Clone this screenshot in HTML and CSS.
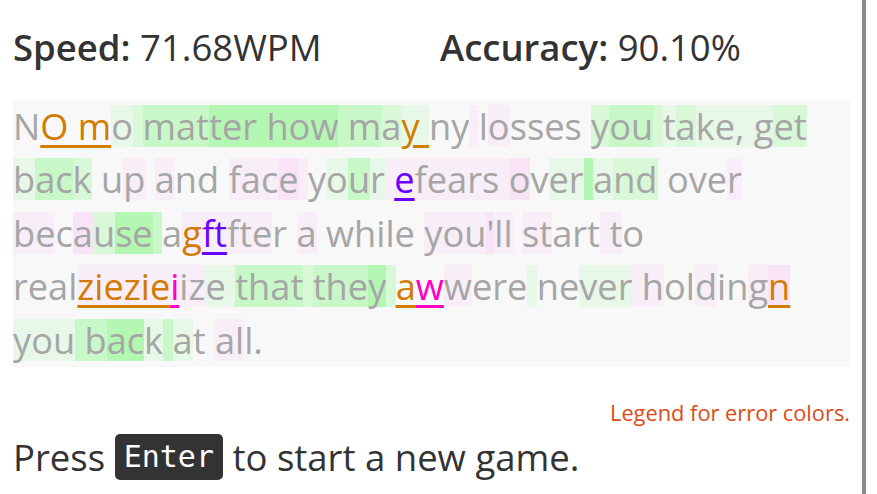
FILE: index.html
```html
<!DOCTYPE html>
<html>
<head>
<meta charset="utf-8">
<link rel="stylesheet" href="styles.css">
</head>
<body>
<div class="page">
  <div class="stats">
    <div class="stat stat-speed"><b>Speed:</b> 71.68WPM</div>
    <div class="stat"><b>Accuracy:</b> 90.10%</div>
  </div>
  <div class="textbox">
    <div class="line">N<span class="err-o">O m</span><span class="g1">o</span><span class="g2"> </span><span class="g3">mat</span><span class="g4">ter how</span><span class="g3"> m</span><span class="g2">a</span><span class="err-o g1">y </span>ny<span class="p1"> </span>l<span class="p1">o</span>sses <span class="g2">y</span><span class="g3">ou</span><span class="g2"> </span><span class="g1">t</span><span class="g2">a</span><span class="g1">ke, g</span><span class="g2">et</span></div>
    <div class="line"><span class="g1">b</span><span class="g3">ac</span><span class="g2">k</span> u<span class="p1">p</span> <span class="p1">a</span>nd <span class="p1">fac</span><span class="p2">e</span><span class="p1"> </span>y<span class="g1">o</span><span class="g3">u</span><span class="g1">r</span><span class="p1"> </span><span class="err-u p1">e</span><span class="p1">fears </span><span class="p2">o</span>v<span class="g1">er</span><span class="g4"> </span><span class="g1">a</span><span class="g2">nd</span> ove<span class="p1">r</span></div>
    <div class="line"><span class="p1">be</span>c<span class="p2">a</span><span class="g2">u</span><span class="g4">se</span><span class="g3"> </span>a<span class="err-o p1">g</span><span class="err-u p1">ft</span><span class="p1">fte</span>r <span class="p1">a</span> while <span class="p1">you</span><span class="p2">'</span><span class="p1">ll</span> <span class="p1">st</span>art<span class="p1"> t</span>o</div>
    <div class="line">real<span class="err-o p1">ziezie</span><span class="err-m p1">i</span><span class="p1">iz</span><span class="g1">e </span><span class="g3">that</span><span class="g2"> </span><span class="g3">the</span><span class="g4">y</span><span class="g2"> </span><span class="err-o">a</span><span class="err-m">w</span><span class="p1">w</span>ere<span class="g1"> </span>ne<span class="g1">ver</span><span class="p1"> h</span>ol<span class="p1">d</span>in<span class="p1">g</span><span class="err-o p2">n</span></div>
    <div class="line"><span class="g1">you</span><span class="g3"> b</span><span class="g4">ac</span><span class="g1">k</span><span class="g3"> </span><span class="g1">a</span>t <span class="p1">al</span>l.</div>
  </div>
  <div class="legend">Legend for error colors.</div>
  <div class="prompt">Press <kbd class="key">Enter</kbd> to start a new game.</div>
</div>
</body>
</html>
```

FILE: styles.css
```css
html, body {
  margin: 0;
  padding: 0;
  background: #ffffff;
}
.page {
  box-sizing: border-box;
  width: 866px;
  min-height: 494px;
  padding: 0 16px 0 13px;
  border-right: 4px solid #8c8c8c;
  font-family: "Open Sans", "Noto Sans", sans-serif;
  color: #333333;
}
.stats {
  display: flex;
  box-sizing: border-box;
  height: 100px;
  padding-top: 22px;
  font-size: 36.5px;
  line-height: 50px;
}
.stat b {
  font-weight: 600;
}
.stat-speed {
  width: 427px;
}
.textbox {
  background: #f8f8f8;
  width: 837px;
  font-size: 36.2px;
  line-height: 53.4px;
  color: #a6a6a6;
  white-space: nowrap;
}
.line {
  height: 53.4px;
}
.line span {
  display: inline-block;
  line-height: 42px;
  white-space: pre;
}
.g1 { background: #e8f8e8; }
.g2 { background: #d8f8d8; }
.g3 { background: #c8f8c8; }
.g4 { background: #b3f7b3; }
.p1 { background: #f7eef8; }
.p2 { background: #f8e4f6; }
.err-o, .err-u, .err-m {
  text-decoration: underline;
  text-decoration-thickness: 3px;
  text-underline-offset: 5px;
}
.err-o { color: #d27c00; }
.err-u { color: #6a00ff; }
.err-m { color: #ff00c6; }
.legend {
  margin-top: 31px;
  width: 837px;
  text-align: right;
  font-size: 21.8px;
  line-height: 30px;
  color: #dd4a16;
}
.prompt {
  margin-top: 6px;
  font-size: 36.5px;
  line-height: 46px;
  color: #333333;
}
.key {
  display: inline-block;
  background: #333333;
  color: #ffffff;
  font-family: "DejaVu Sans Mono", "Liberation Mono", monospace;
  font-size: 30px;
  line-height: 46px;
  padding: 0 9px;
  border-radius: 5px;
  vertical-align: top;
}
```
